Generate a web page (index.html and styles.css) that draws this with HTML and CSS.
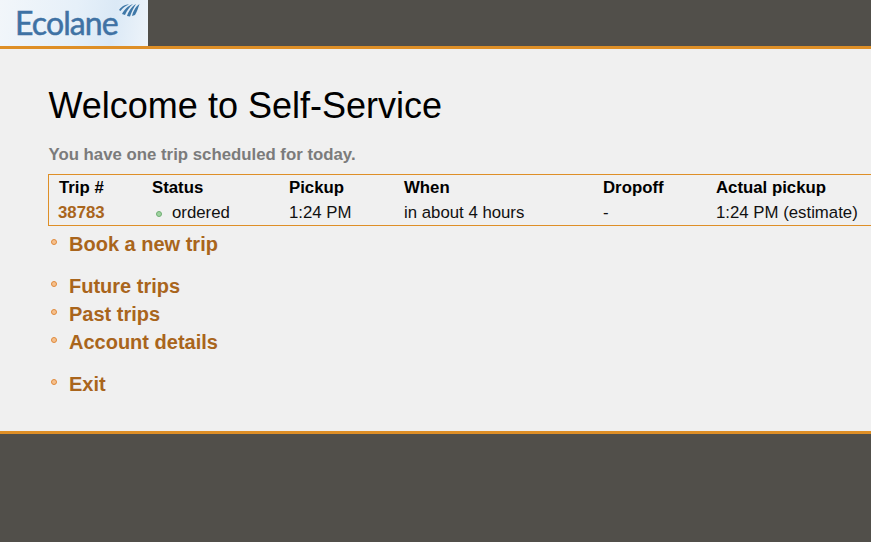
FILE: index.html
```html
<!DOCTYPE html>
<html>
<head>
    <meta charset="utf-8">
    <meta name="viewport" content="width=device-width, initial-scale=1">
    <title>Ecolane Self-Service</title>
    <link rel="stylesheet" href="styles.css">
</head>
<body>
<div class="header">
    <div class="logo">
        <span class="logo-text">Ecolane</span>
        <svg class="logo-mark" width="21" height="14" viewBox="0 0 21 14">
            <path d="M0 7 C3 3 6 1.500 10 1.500 C6 3 3.500 5 1.500 8 Z" fill="#3f78a8"/>
            <path d="M3 11 C5 7 9 2.500 14 1 C10.500 4 8 7.500 6 12 Z" fill="#3f78a8"/>
            <path d="M8 13 C9.500 8.500 12.500 3.500 17 1 C14.500 5 12.500 9 11 13.500 Z" fill="#3f78a8"/>
            <path d="M13 13 C14 9 16 4 20.500 1 C19 5 18 9 16 12 Z" fill="#3f78a8"/>
        </svg>
    </div>
</div>

<div class="main">
    <h1>Welcome to Self-Service</h1>
    <p class="notice">You have one trip scheduled for today.</p>

    <div class="trips">
        <div class="trip-row trip-head">
            <div class="col-id">Trip #</div>
            <div class="col-status">Status</div>
            <div class="col-pickup">Pickup</div>
            <div class="col-when">When</div>
            <div class="col-dropoff">Dropoff</div>
            <div>Actual pickup</div>
        </div>
        <div class="trip-row">
            <div class="col-id"><a class="trip-link" href="#">38783</a></div>
            <div class="col-status"><span class="status-dot"></span>ordered</div>
            <div class="col-pickup">1:24 PM</div>
            <div class="col-when">in about 4 hours</div>
            <div class="col-dropoff">-</div>
            <div>1:24 PM (estimate)</div>
        </div>
    </div>

    <ul class="menu">
        <li><a href="#">Book a new trip</a></li>
    </ul>
    <ul class="menu">
        <li><a href="#">Future trips</a></li>
        <li><a href="#">Past trips</a></li>
        <li><a href="#">Account details</a></li>
    </ul>
    <ul class="menu">
        <li><a href="#">Exit</a></li>
    </ul>
</div>
</body>
</html>
```

FILE: styles.css
```css
html, body {
    margin: 0;
    height: 100%;
}

body {
    background-color: #514f4a;
    font-family: "Liberation Sans", Arial, sans-serif;
    overflow: hidden;
}

.header {
    height: 46px;
    border-bottom: solid 3px #de8f27;
}

.logo {
    width: 148px;
    height: 46px;
    box-sizing: border-box;
    padding-left: 15px;
    display: flex;
    background: linear-gradient(100deg, #f2f6fa 0%, #e6f0f9 50%, #dbe9f6 75%, #eef4fa 100%);
}

.logo-text {
    font-family: "Lato", sans-serif;
    font-size: 32px;
    line-height: 46px;
    letter-spacing: -0.9px;
    color: #3f72a4;
    -webkit-text-stroke: 0.5px #3f72a4;
}

.logo-mark {
    margin: 3px 0 0 1px;
}

.main {
    height: 385px;
    box-sizing: border-box;
    padding: 37px 0 0 48px;
    background-color: #f0f0f0;
    border-bottom: solid 3px #de8f27;
}

h1 {
    margin: 0 0 0 0.5px;
    font-size: 36px;
    line-height: 40px;
    font-weight: normal;
    color: #000;
}

.notice {
    margin: 19px 0 0 0.5px;
    font-size: 16.8px;
    line-height: 20px;
    font-weight: bold;
    color: #7b7b7b;
}

.trips {
    margin-top: 9px;
    height: 52px;
    box-sizing: border-box;
    border: solid 1px #de8f27;
    border-right: none;
    font-size: 16.8px;
    color: #111;
}

.trip-row {
    display: flex;
    height: 25px;
    line-height: 25px;
}

.trip-head {
    font-weight: bold;
    color: #000;
}

.col-id {
    width: 93px;
    padding-left: 10px;
}

.col-status {
    width: 137px;
}

.col-pickup {
    width: 115px;
}

.col-when {
    width: 199px;
}

.col-dropoff {
    width: 113px;
}

.trip-link {
    margin-left: -1px;
    font-weight: bold;
    color: #a9651c;
    text-decoration: none;
}

.status-dot {
    display: inline-block;
    width: 4px;
    height: 4px;
    margin: 0 10px 1px 4px;
    border: solid 1px #6fae73;
    border-radius: 50%;
    background-color: #9fd2a0;
}

.menu {
    list-style: none;
    margin: 0 0 14px 0;
    padding: 0;
}

.menu:first-of-type {
    margin-top: 4px;
}

.menu li {
    display: flex;
    align-items: center;
    height: 28px;
    padding-left: 3px;
}

.menu li::before {
    content: "";
    width: 4px;
    height: 4px;
    margin: -4px 12px 0 0;
    border: solid 1px #e08a3c;
    border-radius: 50%;
    background-color: #f5c08e;
}

.menu a {
    font-size: 20px;
    font-weight: bold;
    color: #a9651c;
    text-decoration: none;
}
```
